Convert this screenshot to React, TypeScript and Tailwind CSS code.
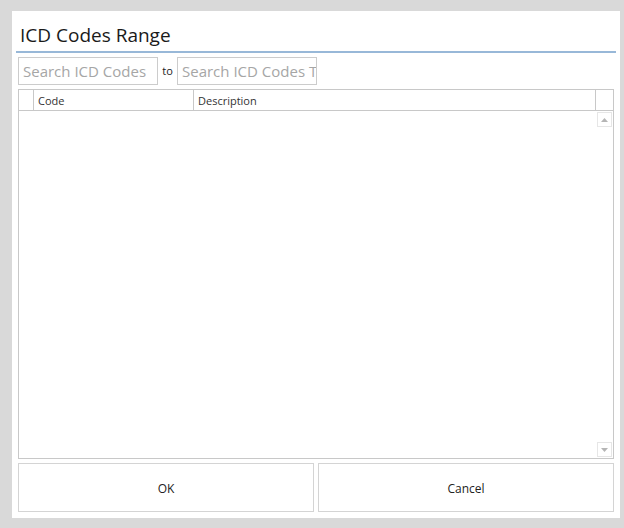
import React from "react";

const font = { fontFamily: '"Open Sans", "Noto Sans", sans-serif' };

function SearchBox({ text }: { text: string }) {
  return (
    <div className="h-[28px] w-[140px] border border-[#cccccc] bg-white pl-[4px] overflow-hidden whitespace-nowrap text-[15px] leading-[26px] text-[#a6a6a6]">
      {text}
    </div>
  );
}

function ScrollArrow({ up }: { up: boolean }) {
  return (
    <div className="w-[15px] h-[15px] border border-[#e6e6e6] flex items-center justify-center">
      <svg width="7" height="4" viewBox="0 0 7 4">
        {up ? <path d="M3.5 0 L7 4 L0 4 Z" fill="#b5b5b5" /> : <path d="M0 0 L7 0 L3.5 4 Z" fill="#b5b5b5" />}
      </svg>
    </div>
  );
}

export default function App() {
  return (
    <div className="w-[624px] h-[528px] bg-[#d9d9d9] pl-[12px] pr-[4px] pt-[11px] pb-[10px]" style={font}>
      <div className="h-full bg-white flex flex-col px-[6px] pb-[6px]">
        <div className="h-[40px] flex items-end pl-[2px] pb-[3px] text-[19px] leading-[26px] text-[#1a1a1a]">
          ICD Codes Range
        </div>
        <div className="h-[2px] bg-[#98b8d8] -mx-[2px]" />
        <div className="mt-[4px] flex items-center">
          <SearchBox text="Search ICD Codes" />
          <span className="w-[19px] text-center text-[11px] text-[#222222]">to</span>
          <SearchBox text="Search ICD Codes To" />
        </div>
        <div className="mt-[4px] flex-1 border border-[#c8c8c8] flex flex-col">
          <div className="h-[21px] flex border-b border-[#c8c8c8] text-[11px] leading-[21px] text-[#333333]">
            <div className="w-[15px] border-r border-[#c8c8c8]" />
            <div className="w-[160px] border-r border-[#c8c8c8] pl-[4px]">Code</div>
            <div className="flex-1 border-r border-[#c8c8c8] pl-[4px]">Description</div>
            <div className="w-[17px]" />
          </div>
          <div className="flex-1 flex justify-end pr-[1px] py-[1px]">
            <div className="flex flex-col justify-between">
              <ScrollArrow up />
              <ScrollArrow up={false} />
            </div>
          </div>
        </div>
        <div className="mt-[4px] h-[49px] flex gap-[4px] text-[12px] text-[#222222]">
          <button className="flex-1 border border-[#d4d4d4] bg-white pt-[2px]">OK</button>
          <button className="flex-1 border border-[#d4d4d4] bg-white pt-[2px]">Cancel</button>
        </div>
      </div>
    </div>
  );
}
